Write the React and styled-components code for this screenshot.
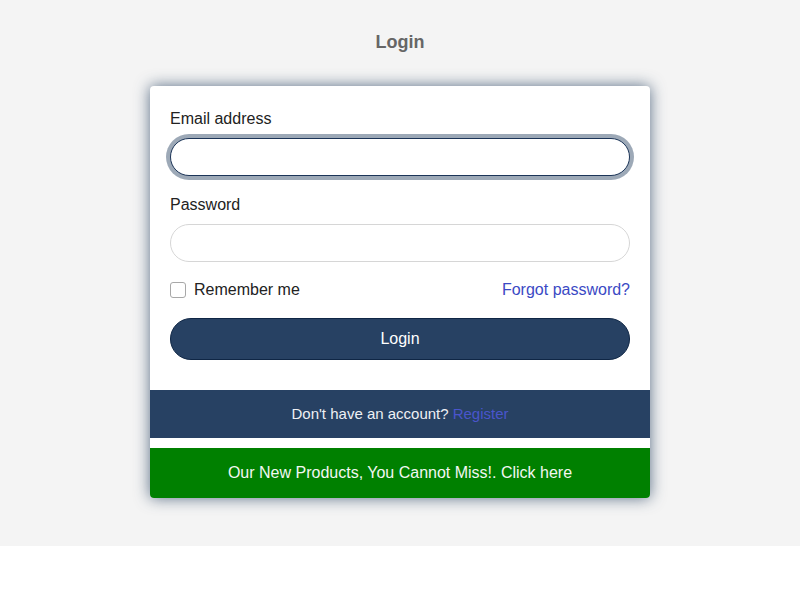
import React from "react";
import styled, { createGlobalStyle } from "styled-components";

const Global = createGlobalStyle`
  html, body { margin: 0; padding: 0; background: #fff; }
  body { font-family: "Liberation Sans", Arial, sans-serif; }
  * { box-sizing: border-box; }
`;

const Page = styled.div`
  background: #f4f4f4;
  padding: 31px 0 48px;
  display: flex;
  flex-direction: column;
  align-items: center;
`;

const Title = styled.h2`
  margin: 0 0 33px;
  font-size: 18px;
  line-height: 22px;
  font-weight: bold;
  color: #666;
`;

const Card = styled.div`
  width: 500px;
  background: #fff;
  border-radius: 4px;
  box-shadow: 0 0 15px rgba(38, 64, 96, 0.75);
  overflow: hidden;
`;

const Body = styled.form`
  padding: 20px 20px 30px;
  display: flex;
  flex-direction: column;
`;

const Label = styled.label`
  font-size: 16px;
  line-height: 24px;
  padding-top: 1px;
  height: 24px;
  color: #222;
  margin: 0 0 8px;
  display: block;
`;

const Field = styled.div`
  display: flex;
  flex-direction: column;
  margin-bottom: ${(p) => p.$mb || 0}px;
`;

const Input = styled.input`
  width: 100%;
  height: 38px;
  border-radius: 19px;
  border: 1px solid #d6d6d6;
  padding: 0 12px;
  font-family: inherit;
  font-size: 16px;
  color: #222;
  background: #fff;
  outline: none;
  caret-color: #222;
  &:focus, &[data-focus="true"] {
    border-color: #1c3558;
    box-shadow: 0 0 0 4px rgba(38, 64, 96, 0.45);
  }
`;

const Row = styled.div`
  display: flex;
  align-items: center;
  justify-content: space-between;
  height: 24px;
  margin-bottom: 16px;
`;

const Check = styled.label`
  display: flex;
  align-items: center;
  gap: 8px;
  font-size: 16px;
  color: #222;
`;

const Box = styled.input`
  appearance: none;
  width: 16px;
  height: 16px;
  margin: 0;
  border: 1px solid #a8a8a8;
  border-radius: 3px;
  background: #fff;
  &:checked {
    background: #274163;
    border-color: #274163;
  }
`;

const Link = styled.a`
  color: ${(p) => p.$color || "#3b49c4"};
  text-decoration: none;
  font-size: ${(p) => p.$size || 16}px;
`;

const Button = styled.button`
  width: 100%;
  height: 42px;
  border-radius: 21px;
  background: #274163;
  border: 1px solid #0f2645;
  color: #fff;
  font-family: inherit;
  font-size: 16px;
`;

const Footer = styled.div`
  background: #274163;
  color: #eef0f4;
  height: 48px;
  padding-bottom: 1px;
  display: flex;
  align-items: center;
  justify-content: center;
  font-size: 15px;
  gap: 4px;
`;

const Promo = styled.div`
  margin-top: 10px;
  background: #008000;
  color: #f2f7f2;
  height: 50px;
  display: flex;
  align-items: center;
  justify-content: center;
  font-size: 16px;
`;

export default function App() {
  return (
    <>
      <Global />
      <Page>
        <Title>Login</Title>
        <Card>
          <Body onSubmit={(e) => e.preventDefault()}>
            <Field $mb={16}>
              <Label htmlFor="email">Email address</Label>
              <Input id="email" type="email" autoFocus data-focus="true" />
            </Field>
            <Field $mb={16}>
              <Label htmlFor="pw">Password</Label>
              <Input id="pw" type="password" />
            </Field>
            <Row>
              <Check>
                <Box type="checkbox" />
                Remember me
              </Check>
              <Link href="#">Forgot password?</Link>
            </Row>
            <Button type="submit">Login</Button>
          </Body>
          <Footer>
            Don't have an account? <Link href="#" $color="#4a55cc" $size={15}>Register</Link>
          </Footer>
          <Promo>Our New Products, You Cannot Miss!. Click here</Promo>
        </Card>
      </Page>
    </>
  );
}
